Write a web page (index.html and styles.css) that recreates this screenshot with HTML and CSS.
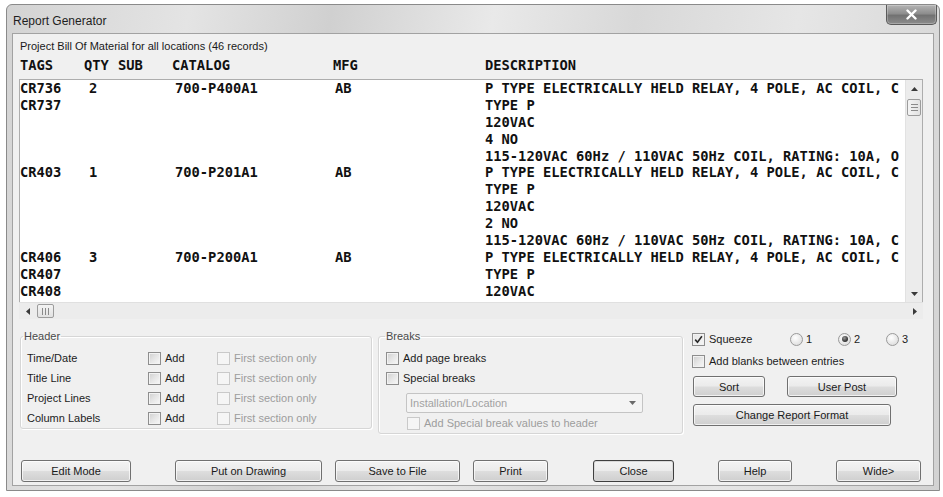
FILE: index.html
```html
<!DOCTYPE html>
<html>
<head>
<meta charset="utf-8">
<title>Report Generator</title>
<link rel="stylesheet" href="styles.css">
</head>
<body>
<div class="window">
  <div class="titlebar">
    <div class="title">Report Generator</div>
    <div class="close-btn">
      <svg width="13" height="11" viewBox="0 0 13 11"><path d="M2.5 1.5 L10.5 9.5 M10.5 1.5 L2.5 9.5" stroke="#ffffff" stroke-width="2.4" stroke-linecap="round" fill="none"/></svg>
    </div>
  </div>
  <div class="client">
    <div class="caption">Project Bill Of Material for all locations (46 records)</div>
    <div class="colheads">
      <span>TAGS</span><span>QTY</span><span>SUB</span><span>CATALOG</span><span>MFG</span><span>DESCRIPTION</span>
    </div>
    <div class="listbox">
      <div class="list-body">
        <div class="row"><span>CR736</span><span>2</span><span>700-P400A1</span><span>AB</span><span class="desc">P TYPE ELECTRICALLY HELD RELAY, 4 POLE, AC COIL, C</span></div>
        <div class="row"><span>CR737</span><span></span><span></span><span></span><span class="desc">TYPE P</span></div>
        <div class="row"><span></span><span></span><span></span><span></span><span class="desc">120VAC</span></div>
        <div class="row"><span></span><span></span><span></span><span></span><span class="desc">4 NO</span></div>
        <div class="row"><span></span><span></span><span></span><span></span><span class="desc">115-120VAC 60Hz / 110VAC 50Hz COIL, RATING: 10A, O</span></div>
        <div class="row"><span>CR403</span><span>1</span><span>700-P201A1</span><span>AB</span><span class="desc">P TYPE ELECTRICALLY HELD RELAY, 4 POLE, AC COIL, C</span></div>
        <div class="row"><span></span><span></span><span></span><span></span><span class="desc">TYPE P</span></div>
        <div class="row"><span></span><span></span><span></span><span></span><span class="desc">120VAC</span></div>
        <div class="row"><span></span><span></span><span></span><span></span><span class="desc">2 NO</span></div>
        <div class="row"><span></span><span></span><span></span><span></span><span class="desc">115-120VAC 60Hz / 110VAC 50Hz COIL, RATING: 10A, C</span></div>
        <div class="row"><span>CR406</span><span>3</span><span>700-P200A1</span><span>AB</span><span class="desc">P TYPE ELECTRICALLY HELD RELAY, 4 POLE, AC COIL, C</span></div>
        <div class="row"><span>CR407</span><span></span><span></span><span></span><span class="desc">TYPE P</span></div>
        <div class="row"><span>CR408</span><span></span><span></span><span></span><span class="desc">120VAC</span></div>
      </div>
      <div class="vscroll">
        <div class="sb-btn"><svg width="7" height="4" viewBox="0 0 7 4"><polygon points="0,4 7,4 3.5,0" fill="#3a3a3a"/></svg></div>
        <div class="vthumb"><span></span><span></span><span></span></div>
        <div class="vtrack"></div>
        <div class="sb-btn"><svg width="7" height="4" viewBox="0 0 7 4"><polygon points="0,0 7,0 3.5,4" fill="#3a3a3a"/></svg></div>
      </div>
    </div>
    <div class="hscroll">
      <div class="sb-btn"><svg width="4" height="7" viewBox="0 0 4 7"><polygon points="4,0 4,7 0,3.5" fill="#3a3a3a"/></svg></div>
      <div class="hthumb"><span></span><span></span><span></span></div>
      <div class="htrack"></div>
      <div class="sb-btn"><svg width="4" height="7" viewBox="0 0 4 7"><polygon points="0,0 0,7 4,3.5" fill="#3a3a3a"/></svg></div>
    </div>

    <div class="lower">
      <fieldset class="group group-header">
        <legend>Header</legend>
        <div class="hrow">
          <span class="hlabel">Time/Date</span>
          <span class="opt opt-add"><span class="cb"></span>Add</span>
          <span class="opt disabled"><span class="cb dis"></span>First section only</span>
        </div>
        <div class="hrow">
          <span class="hlabel">Title Line</span>
          <span class="opt opt-add"><span class="cb"></span>Add</span>
          <span class="opt disabled"><span class="cb dis"></span>First section only</span>
        </div>
        <div class="hrow">
          <span class="hlabel">Project Lines</span>
          <span class="opt opt-add"><span class="cb"></span>Add</span>
          <span class="opt disabled"><span class="cb dis"></span>First section only</span>
        </div>
        <div class="hrow">
          <span class="hlabel">Column Labels</span>
          <span class="opt opt-add"><span class="cb"></span>Add</span>
          <span class="opt disabled"><span class="cb dis"></span>First section only</span>
        </div>
      </fieldset>

      <fieldset class="group group-breaks">
        <legend>Breaks</legend>
        <div class="brow"><span class="opt"><span class="cb"></span>Add page breaks</span></div>
        <div class="brow"><span class="opt"><span class="cb"></span>Special breaks</span></div>
        <div class="combo">
          <span>Installation/Location</span>
          <svg width="7" height="4" viewBox="0 0 7 4"><polygon points="0,0 7,0 3.5,4" fill="#6a6a6a"/></svg>
        </div>
        <div class="brow brow-sub"><span class="opt disabled"><span class="cb dis"></span>Add Special break values to header</span></div>
      </fieldset>

      <div class="options">
        <div class="orow">
          <span class="opt opt-squeeze"><span class="cb checked"><svg width="9" height="9" viewBox="0 0 9 9"><path d="M1.2 4.6 L3.5 7.2 L7.9 1.2" stroke="#2a2a2a" stroke-width="1.6" fill="none"/></svg></span>Squeeze</span>
          <span class="opt radio-item"><span class="rb"></span>1</span>
          <span class="opt radio-item"><span class="rb on"><span></span></span>2</span>
          <span class="opt radio-item"><span class="rb"></span>3</span>
        </div>
        <div class="orow"><span class="opt"><span class="cb"></span>Add blanks between entries</span></div>
        <div class="brow2">
          <div class="btn btn-sort">Sort</div>
          <div class="btn btn-post">User Post</div>
        </div>
        <div class="btn btn-format">Change Report Format</div>
      </div>
    </div>

    <div class="buttons">
      <div class="btn b-edit">Edit Mode</div>
      <div class="btn b-put">Put on Drawing</div>
      <div class="btn b-save">Save to File</div>
      <div class="btn b-print">Print</div>
      <div class="btn b-close">Close</div>
      <div class="btn b-help">Help</div>
      <div class="btn b-wide">Wide&gt;</div>
    </div>
  </div>
</div>
</body>
</html>
```
FILE: styles.css
```css
* { box-sizing: border-box; }

body {
  margin: 0;
  background: #ffffff;
  font-family: "Liberation Sans", Arial, sans-serif;
  font-size: 11px;
  color: #1c1c1c;
}

.window {
  margin: 4px 0 0 6px;
  width: 934px;
  height: 487px;
  border: 1px solid #8a8a8a;
  border-radius: 6px 6px 0 0;
  background: linear-gradient(100deg, #d3d3d3 0%, #e4e4e4 18%, #d0d0d0 32%, #e9e9e9 48%, #d8d8d8 62%, #e6e6e6 78%, #d2d2d2 100%);
  padding: 0 5px 4px 5px;
  display: flex;
  flex-direction: column;
}

.titlebar {
  height: 28px;
  display: flex;
  justify-content: space-between;
  align-items: flex-start;
}

.title {
  padding: 8px 0 0 1px;
  font-size: 12px;
  line-height: 16px;
  color: #1e1e1e;
}

.close-btn {
  width: 51px;
  height: 20px;
  margin-right: -3px;
  border: 1px solid #5a5a5a;
  border-top: none;
  border-radius: 0 0 5px 5px;
  background: linear-gradient(#b4b4b4 0%, #8e8e8e 45%, #727272 55%, #8c8c8c 100%);
  box-shadow: inset 0 0 0 1px rgba(255,255,255,0.25);
  display: flex;
  align-items: center;
  justify-content: center;
}

.client {
  flex: 1;
  background: #f0f0f0;
  border: 1px solid #a2a2a2;
  padding: 5px 10px 0 6px;
  display: flex;
  flex-direction: column;
}

.caption {
  padding-left: 1px;
  line-height: 14px;
  font-size: 11px;
  color: #1a1a1a;
}

.colheads,
.row {
  font-family: "DejaVu Sans Mono", "Liberation Mono", monospace;
  font-weight: bold;
  font-size: 13.75px;
  color: #111111;
  display: grid;
  white-space: nowrap;
}

.colheads {
  margin-top: 4px;
  height: 16px;
  line-height: 16px;
  padding-left: 1px;
  grid-template-columns: 64px 34px 54px 161px 152px 1fr;
}

.listbox {
  margin-top: 6px;
  height: 223px;
  border: 1px solid #adadad;
  border-bottom: none;
  background: #ffffff;
  display: flex;
}

.list-body {
  flex: 1;
  overflow: hidden;
}

.row {
  height: 16.9px;
  line-height: 16.9px;
  grid-template-columns: 69px 86px 160px 150px 1fr;
}

.desc { overflow: hidden; }

.vscroll {
  width: 17px;
  background: #ececec;
  border-left: 1px solid #e2e2e2;
  display: flex;
  flex-direction: column;
}

.sb-btn {
  width: 17px;
  height: 17px;
  display: flex;
  align-items: center;
  justify-content: center;
  flex: none;
}

.vthumb {
  margin: 2px 1px 0 1px;
  height: 17px;
  border: 1px solid #9c9c9c;
  border-radius: 2px;
  background: linear-gradient(90deg, #f4f4f4, #e2e2e2);
  display: flex;
  flex-direction: column;
  align-items: center;
  justify-content: center;
  gap: 2px;
}

.vthumb span {
  width: 7px;
  height: 1px;
  background: #8a8a8a;
}

.vtrack { flex: 1; }

.hscroll {
  height: 17px;
  background: #ececec;
  border-top: 1px solid #e0e0e0;
  display: flex;
}

.hthumb {
  margin: 1px 0 1px 1px;
  width: 17px;
  border: 1px solid #9c9c9c;
  border-radius: 2px;
  background: linear-gradient(#f4f4f4, #e2e2e2);
  display: flex;
  align-items: center;
  justify-content: center;
  gap: 2px;
}

.hthumb span {
  width: 1px;
  height: 7px;
  background: #8a8a8a;
}

.htrack { flex: 1; }

.lower {
  margin-top: 10px;
  display: flex;
  align-items: flex-start;
}

.group {
  margin: 0;
  padding: 0;
  border: 1px solid #d6d6d6;
  border-radius: 3px;
  box-shadow: inset 1px 1px 0 #ffffff, 1px 1px 0 #ffffff;
  min-width: 0;
  flex: none;
}

.group legend {
  padding: 0 1px;
  line-height: 14px;
  font-size: 11px;
  color: #4a4a4a;
}

.group-header {
  margin-left: 1px;
  width: 352px;
  padding-top: 5px;
}

.group-header legend { margin-left: 2px; }

.hrow {
  height: 20px;
  display: flex;
  align-items: center;
  padding-left: 6px;
}

.hlabel { width: 121px; color: #1c1c1c; }

.opt {
  display: flex;
  align-items: center;
  gap: 4px;
  white-space: nowrap;
}

.opt-add { width: 69px; }

.disabled { color: #9d9d9d; }

.cb {
  width: 13px;
  height: 13px;
  border: 1px solid #8e8e8e;
  background: linear-gradient(135deg, #cfcfcf 0%, #e8e8e8 55%, #f8f8f8 100%);
  box-shadow: inset 0 0 0 1px #f2f2f2;
  display: flex;
  align-items: center;
  justify-content: center;
  flex: none;
}

.cb.dis {
  border-color: #c9c9c9;
  background: #f5f5f5;
  box-shadow: none;
}

.cb.checked {
  background: linear-gradient(135deg, #e6e6e6 0%, #f6f6f6 100%);
}

.group-breaks {
  margin-left: 6px;
  width: 305px;
  padding: 5px 0 1px 7px;
}

.group-breaks legend { margin-left: -1px; }

.brow {
  height: 20px;
  display: flex;
  align-items: center;
}

.combo {
  margin: 5px 0 0 20px;
  width: 237px;
  height: 20px;
  border: 1px solid #c4c4c4;
  border-radius: 2px;
  background: #f4f4f4;
  color: #a2a2a2;
  display: flex;
  align-items: center;
  justify-content: space-between;
  padding: 0 6px 0 3px;
}

.brow.brow-sub {
  height: 18px;
  margin: 1px 0 0 21px;
}

.options {
  margin-left: 9px;
  flex: 1;
  min-width: 0;
}

.orow {
  height: 20px;
  display: flex;
  align-items: center;
}

.orow + .orow { margin-top: 2px; }

.opt-squeeze { width: 98px; flex: none; }

.radio-item { width: 48px; gap: 3px; flex: none; }

.radio-item:last-child { width: auto; }

.rb {
  width: 13px;
  height: 13px;
  border-radius: 50%;
  border: 1px solid #9a9a9a;
  background: radial-gradient(circle at 40% 35%, #ffffff 0%, #e2e2e2 70%, #d0d0d0 100%);
  display: flex;
  align-items: center;
  justify-content: center;
  flex: none;
}

.rb.on span {
  width: 6px;
  height: 6px;
  border-radius: 50%;
  background: radial-gradient(circle at 40% 35%, #9a9a9a 0%, #3a3a3a 60%, #202020 100%);
}

.brow2 {
  margin-top: 5px;
  display: flex;
}

.btn {
  height: 22px;
  border: 1px solid #707070;
  border-radius: 3px;
  background: linear-gradient(#f3f3f3 0%, #ebebeb 48%, #dddddd 52%, #cfcfcf 100%);
  box-shadow: inset 0 0 0 1px rgba(255,255,255,0.7);
  display: flex;
  align-items: center;
  justify-content: center;
  font-size: 11px;
  color: #1a1a1a;
  flex: none;
}

.btn-sort { margin-left: 1px; width: 72px; height: 21px; }
.btn-post { margin-left: 22px; width: 110px; height: 21px; }
.btn-format { margin: 7px 0 0 1px; width: 198px; }

.buttons {
  margin-top: auto;
  margin-bottom: 3px;
  display: flex;
}

.b-edit { margin-left: 2px; width: 110px; }
.b-put { margin-left: 44px; width: 147px; }
.b-save { margin-left: 13px; width: 125px; }
.b-print { margin-left: 13px; width: 75px; }
.b-close {
  margin-left: 45px;
  width: 81px;
  border-color: #3f3f3f;
  box-shadow: inset 0 0 0 1px #d8d8d8;
}
.b-help { margin-left: 44px; width: 74px; }
.b-wide { margin-left: 44px; width: 85px; }
```
